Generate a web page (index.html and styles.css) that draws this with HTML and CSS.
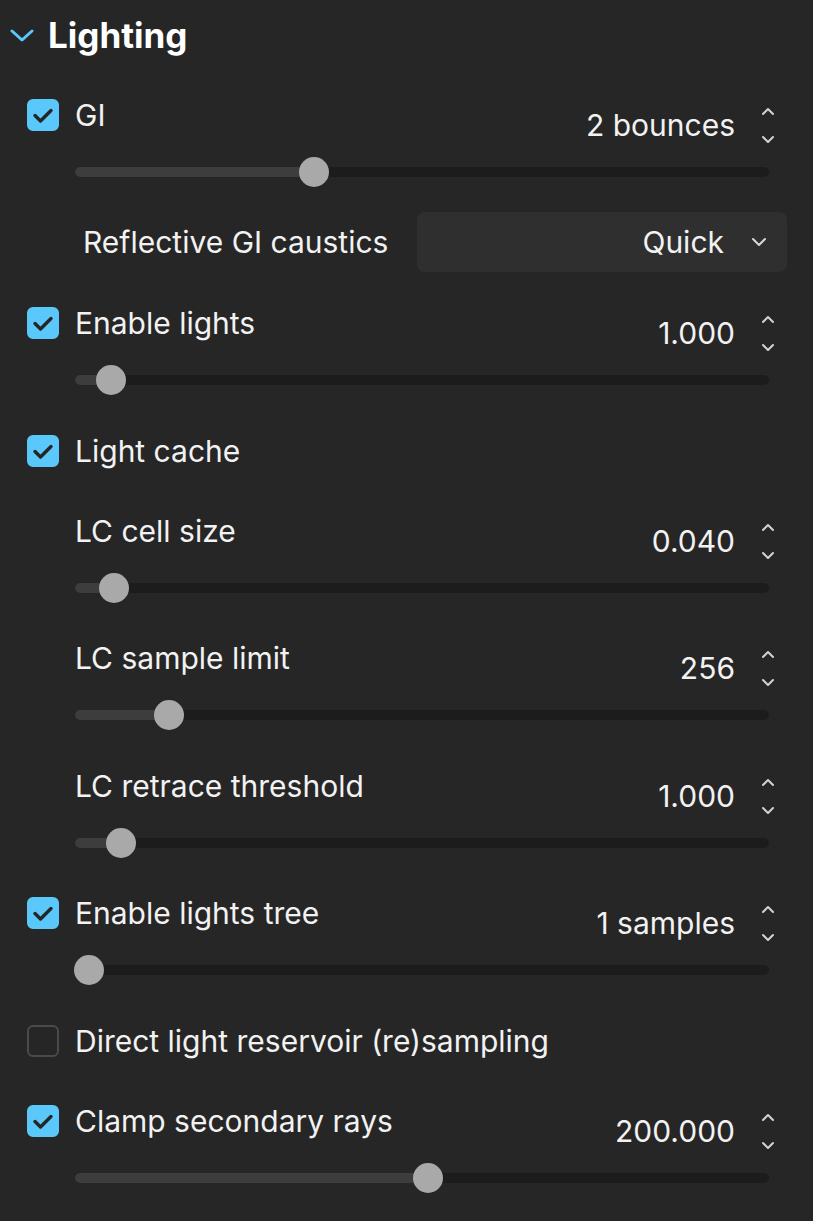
FILE: index.html
```html
<!DOCTYPE html>
<html lang="en">
<head>
    <meta charset="UTF-8">
    <meta name="viewport" content="width=device-width, initial-scale=1.0">
    <title>Lighting</title>
    <link rel="stylesheet" href="styles.css">
</head>
<body>
    <div class="panel">
        <div class="section-title">
            <svg class="caret" width="24" height="14" viewBox="0 0 24 14"><path d="M2 2 L12 11 L22 2" fill="none" stroke="#5ac8fa" stroke-width="3" stroke-linecap="round" stroke-linejoin="round"/></svg>
            <span>Lighting</span>
        </div>

        <div class="item tight">
            <div class="item-head">
                <label class="check-label"><span class="check on"><svg viewBox="0 0 32 32"><path d="M8 16.5 L13.5 22 L24 11.5" fill="none" stroke="#262626" stroke-width="3.4" stroke-linecap="round" stroke-linejoin="round"/></svg></span>GI</label>
                <div class="value">2 bounces<span class="spin"></span></div>
            </div>
            <div class="slider"><div class="fill" style="width: 34.5%"></div><div class="thumb" style="left: 34.5%"></div></div>
        </div>

        <div class="select-row">
            <span class="select-label">Reflective GI caustics</span>
            <div class="select">Quick<svg width="16" height="10" viewBox="0 0 16 10"><path d="M2 2 L8 8 L14 2" fill="none" stroke="#d8d8d8" stroke-width="2" stroke-linecap="round" stroke-linejoin="round"/></svg></div>
        </div>

        <div class="item">
            <div class="item-head">
                <label class="check-label"><span class="check on"><svg viewBox="0 0 32 32"><path d="M8 16.5 L13.5 22 L24 11.5" fill="none" stroke="#262626" stroke-width="3.4" stroke-linecap="round" stroke-linejoin="round"/></svg></span>Enable lights</label>
                <div class="value">1.000<span class="spin"></span></div>
            </div>
            <div class="slider"><div class="fill" style="width: 5.2%"></div><div class="thumb" style="left: 5.2%"></div></div>
        </div>

        <div class="item plain">
            <div class="item-head">
                <label class="check-label"><span class="check on"><svg viewBox="0 0 32 32"><path d="M8 16.5 L13.5 22 L24 11.5" fill="none" stroke="#262626" stroke-width="3.4" stroke-linecap="round" stroke-linejoin="round"/></svg></span>Light cache</label>
            </div>
        </div>

        <div class="item">
            <div class="item-head">
                <label class="check-label">LC cell size</label>
                <div class="value">0.040<span class="spin"></span></div>
            </div>
            <div class="slider"><div class="fill" style="width: 5.6%"></div><div class="thumb" style="left: 5.6%"></div></div>
        </div>

        <div class="item">
            <div class="item-head">
                <label class="check-label">LC sample limit</label>
                <div class="value">256<span class="spin"></span></div>
            </div>
            <div class="slider"><div class="fill" style="width: 13.6%"></div><div class="thumb" style="left: 13.6%"></div></div>
        </div>

        <div class="item">
            <div class="item-head">
                <label class="check-label">LC retrace threshold</label>
                <div class="value">1.000<span class="spin"></span></div>
            </div>
            <div class="slider"><div class="fill" style="width: 6.6%"></div><div class="thumb" style="left: 6.6%"></div></div>
        </div>

        <div class="item">
            <div class="item-head">
                <label class="check-label"><span class="check on"><svg viewBox="0 0 32 32"><path d="M8 16.5 L13.5 22 L24 11.5" fill="none" stroke="#262626" stroke-width="3.4" stroke-linecap="round" stroke-linejoin="round"/></svg></span>Enable lights tree</label>
                <div class="value">1 samples<span class="spin"></span></div>
            </div>
            <div class="slider"><div class="fill" style="width: 2%"></div><div class="thumb" style="left: 2%"></div></div>
        </div>

        <div class="item plain">
            <div class="item-head">
                <label class="check-label"><span class="check"></span>Direct light reservoir (re)sampling</label>
            </div>
        </div>

        <div class="item">
            <div class="item-head">
                <label class="check-label"><span class="check on"><svg viewBox="0 0 32 32"><path d="M8 16.5 L13.5 22 L24 11.5" fill="none" stroke="#262626" stroke-width="3.4" stroke-linecap="round" stroke-linejoin="round"/></svg></span>Clamp secondary rays</label>
                <div class="value">200.000<span class="spin"></span></div>
            </div>
            <div class="slider"><div class="fill" style="width: 50.8%"></div><div class="thumb" style="left: 50.8%"></div></div>
        </div>
    </div>
</body>
</html>
```

FILE: styles.css
```css
html, body {
    margin: 0;
    padding: 0;
    background: #262626;
}
body {
    font-family: Inter, "Noto Sans", sans-serif;
    color: #f2f2f2;
    height: 1221px;
    overflow: hidden;
}
.panel {
    padding: 14px 26px 0 27px;
}
.section-title {
    display: flex;
    align-items: center;
    height: 42px;
    margin-left: -17px;
    margin-bottom: 43px;
    font-size: 35px;
    font-weight: 700;
    color: #ffffff;
}
.caret {
    margin-right: 14px;
    margin-top: 2px;
}
.item {
    display: flex;
    flex-direction: column;
    padding-bottom: 33.5px;
}
.item.tight {
    padding-bottom: 0;
}
.item.plain {
    padding-bottom: 28px;
}
.item-head {
    display: flex;
    justify-content: space-between;
    align-items: flex-start;
    height: 52px;
}
.check-label {
    display: flex;
    align-items: center;
    height: 32px;
    padding-left: 48px;
    font-size: 30px;
    position: relative;
}
.check {
    position: absolute;
    left: 0;
    top: 0;
    width: 28px;
    height: 28px;
    border: 2px solid #4a4a4a;
    border-radius: 6px;
}
.check.on {
    background: #5ac8fa;
    border-color: #5ac8fa;
}
.check svg {
    display: block;
    width: 32px;
    height: 32px;
    margin: -2px;
}
.value {
    display: flex;
    align-items: center;
    height: 44px;
    margin-top: 4px;
    padding-right: 12px;
    font-size: 30px;
}
.spin {
    width: 14px;
    height: 42px;
    margin-left: 26px;
    background:
        url("data:image/svg+xml,%3Csvg xmlns='http://www.w3.org/2000/svg' width='14' height='42' viewBox='0 0 14 42'%3E%3Cpath d='M2 10 L7 5 L12 10 M2 33 L7 38 L12 33' fill='none' stroke='%23d2d2d2' stroke-width='2' stroke-linecap='round' stroke-linejoin='round'/%3E%3C/svg%3E") no-repeat;
}
.slider {
    position: relative;
    height: 10px;
    margin: 16px 18px 16px 48px;
    background: #1c1c1c;
    border-radius: 5px;
}
.fill {
    height: 100%;
    background: #3d3d3d;
    border-radius: 5px 0 0 5px;
}
.thumb {
    position: absolute;
    top: 50%;
    width: 30px;
    height: 30px;
    margin: -15px 0 0 -15px;
    border-radius: 50%;
    background: #a9a9a9;
}
.select-row {
    display: flex;
    align-items: center;
    justify-content: space-between;
    margin: 19px 0 35px 0;
}
.select-label {
    font-size: 30px;
    padding-left: 56px;
}
.select {
    display: flex;
    align-items: center;
    justify-content: flex-end;
    width: 370px;
    height: 60px;
    box-sizing: border-box;
    padding-right: 20px;
    background: #2f2f2f;
    border-radius: 8px;
    font-size: 30px;
}
.select svg {
    margin-left: 27px;
}
```
